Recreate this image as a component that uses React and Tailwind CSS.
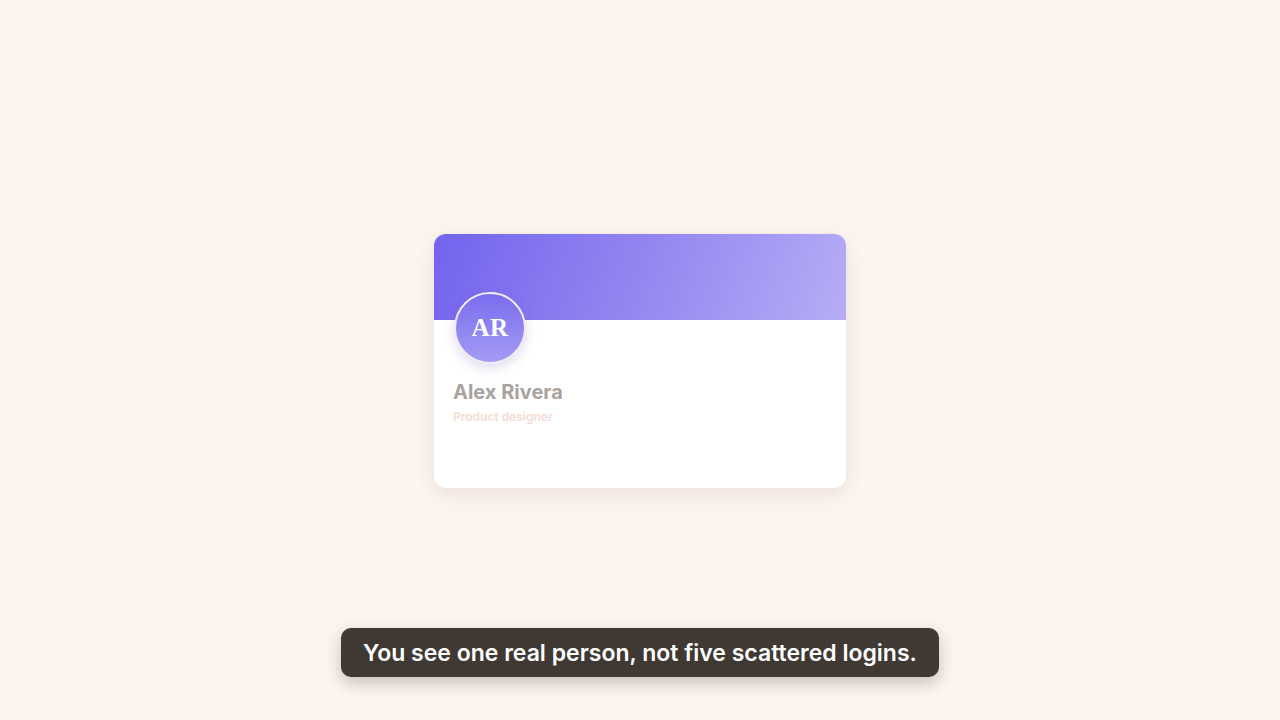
import React from 'react';

const profile = {
  initials: 'AR',
  name: 'Alex Rivera',
  role: 'Product designer',
};

function ProfileCard({ person }) {
  return (
    <div className="w-[412px] h-[254px] bg-white rounded-[12px] overflow-hidden shadow-[0_6px_18px_rgba(120,90,70,0.12)] ring-1 ring-[#f1e9e4]">
      <div className="h-[86px] bg-[linear-gradient(110deg,#7264ee_0%,#9486f0_50%,#b6adf6_100%)]" />
      <div className="px-5">
        <div className="-mt-[28px] w-[72px] h-[72px] rounded-full border-2 border-[#eeeaf6] bg-gradient-to-b from-[#7b6cee] to-[#a49bf3] flex items-center justify-center shadow-[0_4px_12px_rgba(90,70,160,0.2)]">
          <span className="text-white text-[25px] font-bold font-['Liberation_Serif',serif] tracking-[0.5px]">
            {person.initials}
          </span>
        </div>
        <p className="mt-[14px] text-[20px] leading-[28px] font-bold text-[#a9a39f] font-['Inter',sans-serif] -ml-px">
          {person.name}
        </p>
        <p className="mt-[3px] text-[12px] leading-[16px] font-semibold text-[#f4dcd6] font-['Inter',sans-serif] -ml-px">
          {person.role}
        </p>
      </div>
    </div>
  );
}

export default function App() {
  return (
    <div className="relative w-full h-[720px] bg-[#fcf4ee] flex items-center justify-center">
      <div className="translate-y-[1px]">
        <ProfileCard person={profile} />
      </div>
      <div className="absolute bottom-[43px] left-0 right-0 flex justify-center">
        <div className="h-[49px] px-[22px] rounded-[10px] bg-[#3f3833] flex items-center shadow-[0_6px_16px_rgba(60,40,30,0.25)]">
          <span className="mt-px text-white text-[23px] font-semibold font-['Inter',sans-serif]">
            You see one real person, not five scattered logins.
          </span>
        </div>
      </div>
    </div>
  );
}
